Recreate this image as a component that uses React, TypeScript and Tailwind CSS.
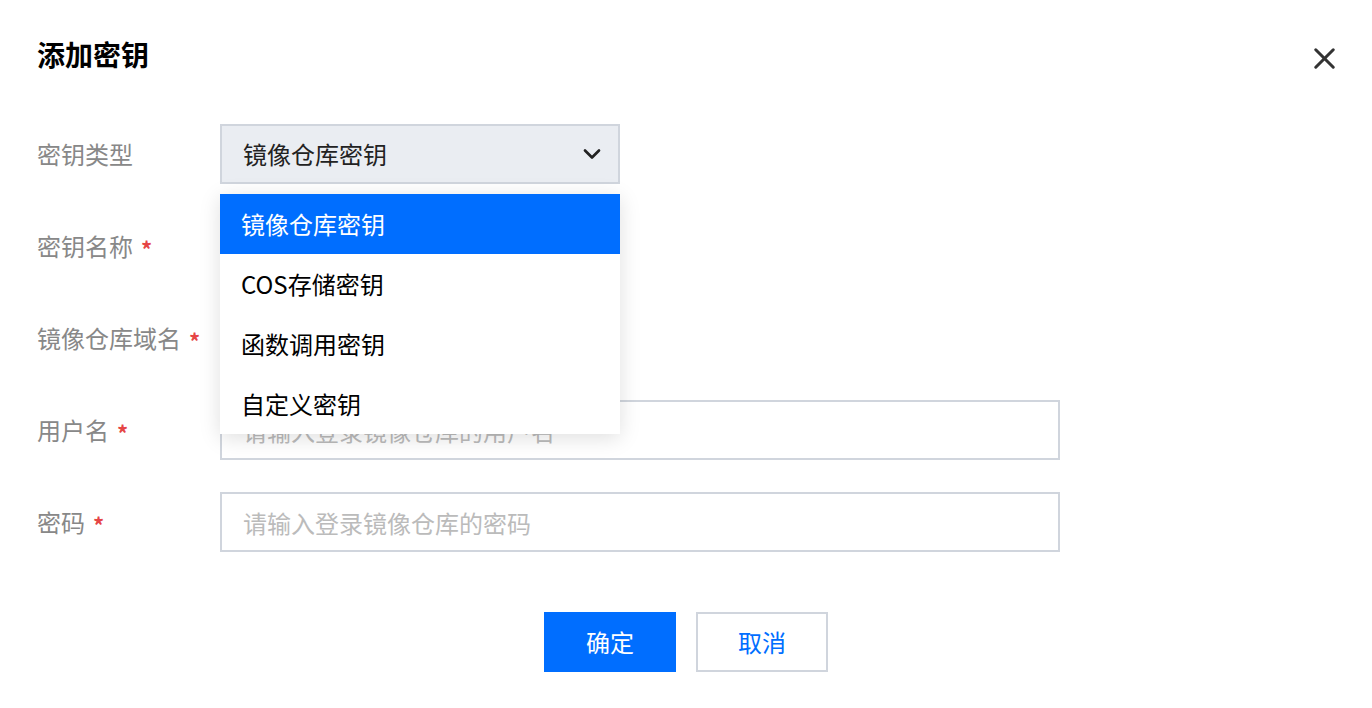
import { X, ChevronDown } from 'lucide-react'

const fontCls = "font-['PingFang_SC','Noto_Sans_CJK_SC','Noto_Sans',sans-serif]"

const opcoes = ['镜像仓库密钥', 'COS存储密钥', '函数调用密钥', '自定义密钥']

function Label({ text, required }: { text: string; required?: boolean }) {
  return (
    <div className="w-[183px] shrink-0 flex items-center text-[24px] text-[#888888]">
      <span>{text}</span>
      {required && <span className="ml-[8px] text-[22px] font-bold text-[#e54545] mt-[4px]">*</span>}
    </div>
  )
}

export default function App() {
  const inputCls = 'w-[840px] h-[60px] border-2 border-[#d0d5dd] bg-white px-[21px] text-[24px] text-[#333] placeholder:text-[#bbbbbb] outline-none'

  return (
    <div className={`w-[1372px] h-[708px] bg-white overflow-hidden ${fontCls}`}>
      <div className="pt-[36px] pl-[37px] pr-[30px]">
        <div className="h-[36px] flex items-center justify-between">
          <h1 className="text-[28px] leading-[36px] font-bold text-black">添加密钥</h1>
          <button className="mt-[8px] text-[#333]"><X className="w-[35px] h-[35px]" strokeWidth={2.1} /></button>
        </div>
      </div>

      <div className="mt-[52px] pl-[37px] flex flex-col gap-[32px]">
        <div className="flex h-[60px]">
          <Label text="密钥类型" />
          <div className="relative">
            <div className="w-[400px] h-[60px] border-2 border-[#d0d5dd] bg-[#eaedf2] flex items-center justify-between pl-[21px] pr-[12px] text-[24px] text-[#222]">
              <span>镜像仓库密钥</span>
              <ChevronDown className="w-[28px] h-[28px] text-[#222]" strokeWidth={2.3} />
            </div>
            <ul className="absolute left-0 top-[70px] z-10 w-[400px] bg-white shadow-[0_4px_20px_rgba(0,0,0,0.13)]">
              {opcoes.map((o, i) => (
                <li key={o} className={`h-[60px] flex items-center pl-[21px] text-[24px] ${i === 0 ? 'bg-[#006eff] text-white' : 'text-black'}`}>{o}</li>
              ))}
            </ul>
          </div>
        </div>

        <div className="flex h-[60px]">
          <Label text="密钥名称" required />
        </div>

        <div className="flex h-[60px]">
          <Label text="镜像仓库域名" required />
        </div>

        <div className="flex h-[60px]">
          <Label text="用户名" required />
          <input className={inputCls} placeholder="请输入登录镜像仓库的用户名" />
        </div>

        <div className="flex h-[60px]">
          <Label text="密码" required />
          <input className={inputCls} placeholder="请输入登录镜像仓库的密码" />
        </div>
      </div>

      <div className="mt-[60px] flex justify-center gap-[20px]">
        <button className="w-[132px] h-[60px] bg-[#006eff] text-white text-[24px]">确定</button>
        <button className="w-[132px] h-[60px] border-2 border-[#d0d5dd] bg-white text-[#006eff] text-[24px]">取消</button>
      </div>
    </div>
  )
}
